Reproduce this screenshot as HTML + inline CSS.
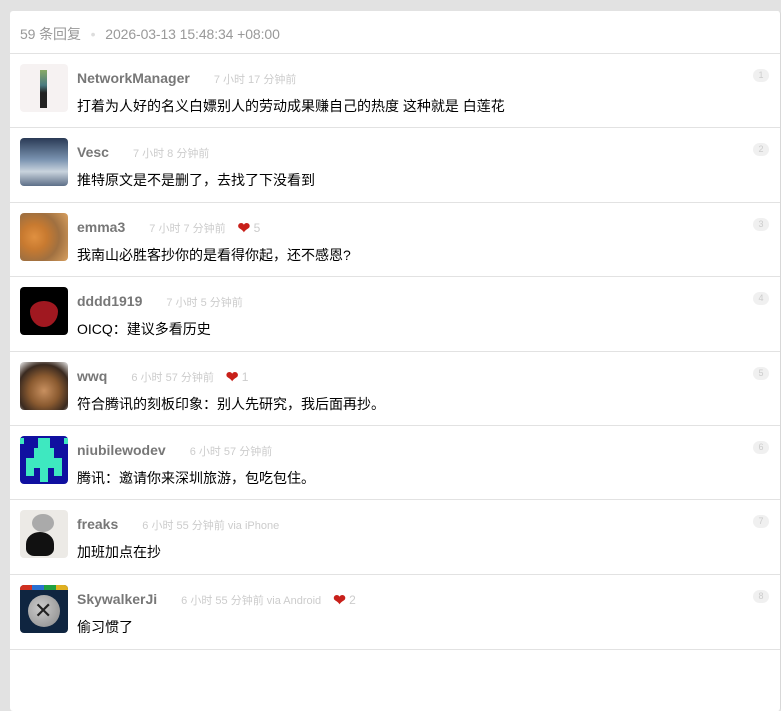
<!DOCTYPE html>
<html><head><meta charset="utf-8"><style>
*{margin:0;padding:0;box-sizing:border-box}
body{width:781px;height:648px;overflow:hidden;background:#e2e2e2;font-family:"Liberation Sans","Noto Sans CJK SC",sans-serif}
.box{position:absolute;left:10px;top:11px;width:771px;height:700px;background:#fff;border-radius:3px;border-right:1px solid #d8d8d8}
.hd{height:43px;border-bottom:1px solid #e2e2e2;padding:13px 0 0 10px;font-size:14px;color:#999;letter-spacing:-0.1px}
.hd .dot{color:#ddd;margin:0 6px}
.row{position:relative;border-bottom:1px solid #e2e2e2}
.av{position:absolute;left:10px;top:10px;width:48px;height:48px;border-radius:4px;overflow:hidden}
.nm{position:absolute;left:67px;top:16px;font-size:14px;font-weight:bold;color:#777;white-space:nowrap}
.nm .t{font-size:11px;font-weight:normal;color:#ccc;margin-left:24px}
.nm .h{font-size:12px;font-weight:normal;color:#ccc;margin-left:12px}
.nm .h b{color:#c8201a;font-size:15px;vertical-align:-1px}
.ct{position:absolute;left:67px;top:42px;font-size:14px;color:#000;white-space:nowrap}
.no{position:absolute;right:11px;top:15px;width:16px;height:13px;border-radius:7px;background:#f0f0f0;color:#ccc;font-size:9px;text-align:center;line-height:13px}
</style></head><body>
<div class="box">
<div class="hd">59 条回复 <span class="dot">•</span> 2026-03-13 15:48:34 +08:00</div>

<div class="row" style="height:74px"><div class="av" style="background:#f6f2f2"><div style="position:absolute;left:20px;top:6px;width:7px;height:38px;background:linear-gradient(#8a6 0,#4a7a80 40%,#222 60%,#222)"></div></div>
<div class="nm">NetworkManager<span class="t">7 小时 17 分钟前</span></div>
<div class="ct">打着为人好的名义白嫖别人的劳动成果赚自己的热度 这种就是 白莲花</div><div class="no">1</div></div>

<div class="row" style="height:75px"><div class="av" style="background:linear-gradient(#2a3a55,#7a93b0 45%,#c9d3dd 70%,#5d6f88)"></div>
<div class="nm">Vesc<span class="t">7 小时 8 分钟前</span></div>
<div class="ct">推特原文是不是删了，去找了下没看到</div><div class="no">2</div></div>

<div class="row" style="height:74px"><div class="av" style="background:radial-gradient(circle at 30% 50%,#e09040 0,#c87a30 30%,#a07040 60%,#d8a060)"></div>
<div class="nm">emma3<span class="t">7 小时 7 分钟前</span><span class="h"><b>❤</b> 5</span></div>
<div class="ct">我南山必胜客抄你的是看得你起，还不感恩?</div><div class="no">3</div></div>

<div class="row" style="height:75px"><div class="av" style="background:#000"><div style="position:absolute;left:10px;top:14px;width:28px;height:26px;background:#a01820;border-radius:50% 50% 50% 50%/40% 40% 60% 60%"></div></div>
<div class="nm">dddd1919<span class="t">7 小时 5 分钟前</span></div>
<div class="ct">OICQ：建议多看历史</div><div class="no">4</div></div>

<div class="row" style="height:74px"><div class="av" style="background:radial-gradient(circle at 50% 60%,#c89060 0,#8a5a30 40%,#3a2a20 70%,#eee)"></div>
<div class="nm">wwq<span class="t">6 小时 57 分钟前</span><span class="h"><b>❤</b> 1</span></div>
<div class="ct">符合腾讯的刻板印象：别人先研究，我后面再抄。</div><div class="no">5</div></div>

<div class="row" style="height:74px"><div class="av" style="background:#1010a0"><svg width="48" height="48"><g fill="#3ee8c0"><rect x="18" y="2" width="12" height="10"/><rect x="14" y="12" width="20" height="10"/><rect x="6" y="22" width="36" height="10"/><rect x="6" y="32" width="8" height="8"/><rect x="34" y="32" width="8" height="8"/><rect x="20" y="32" width="8" height="14"/><rect x="0" y="2" width="4" height="6"/><rect x="44" y="2" width="4" height="6"/></g></svg></div>
<div class="nm">niubilewodev<span class="t">6 小时 57 分钟前</span></div>
<div class="ct">腾讯：邀请你来深圳旅游，包吃包住。</div><div class="no">6</div></div>

<div class="row" style="height:75px"><div class="av" style="background:#eceae6"><div style="position:absolute;left:12px;top:4px;width:22px;height:18px;background:#aaa;border-radius:50%"></div><div style="position:absolute;left:6px;top:22px;width:28px;height:24px;background:#111;border-radius:50% 50% 30% 30%"></div></div>
<div class="nm">freaks<span class="t">6 小时 55 分钟前 via iPhone</span></div>
<div class="ct">加班加点在抄</div><div class="no">7</div></div>

<div class="row" style="height:75px"><div class="av" style="background:#0f2540"><div style="display:flex;height:5px"><i style="flex:1;background:#d03020"></i><i style="flex:1;background:#2a70d0"></i><i style="flex:1;background:#20a040"></i><i style="flex:1;background:#e0b020"></i></div><div style="position:absolute;left:8px;top:10px;width:32px;height:32px;border-radius:50%;background:radial-gradient(circle at 40% 40%,#ccc,#888)"></div><div style="position:absolute;left:14px;top:13px;font-size:22px;color:#222">✕</div></div>
<div class="nm">SkywalkerJi<span class="t">6 小时 55 分钟前 via Android</span><span class="h"><b>❤</b> 2</span></div>
<div class="ct">偷习惯了</div><div class="no">8</div></div>
</div>
</body></html>
